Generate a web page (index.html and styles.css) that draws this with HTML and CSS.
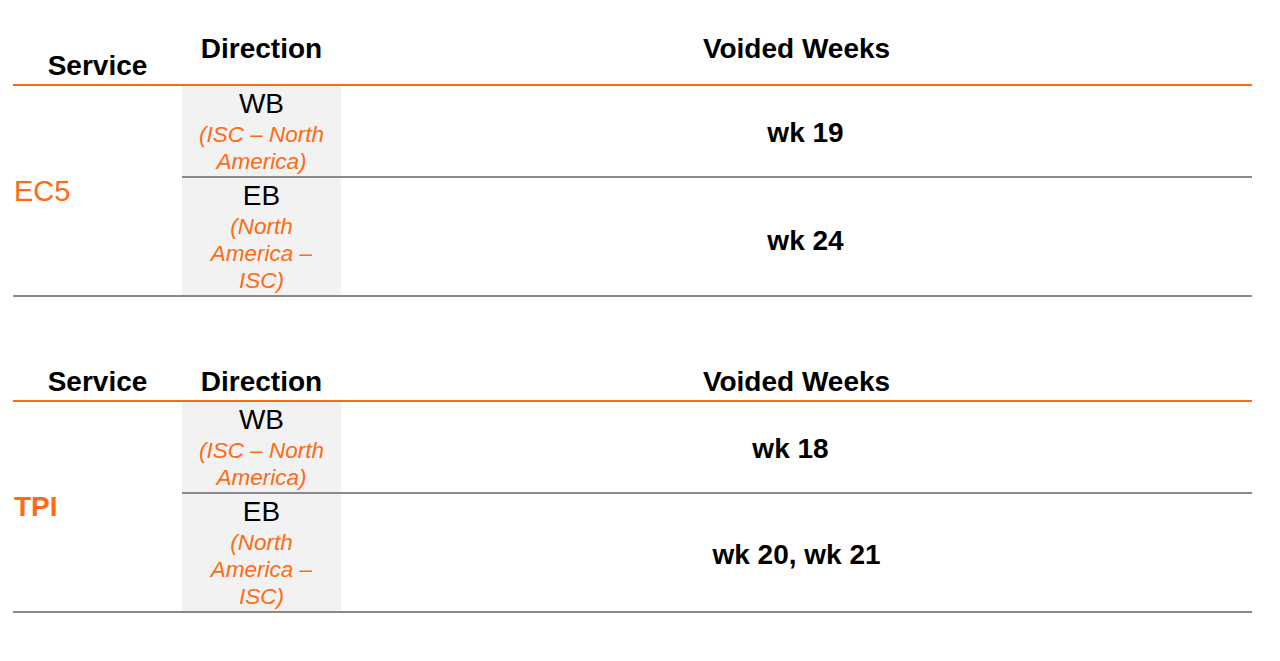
FILE: index.html
```html
<!DOCTYPE html>
<html lang="en">
<head>
<meta charset="utf-8">
<title>Voided Weeks</title>
<link rel="stylesheet" href="styles.css">
</head>
<body>
<div class="page">
  <table class="svc-table first">
    <colgroup>
      <col class="c-svc"><col class="c-dir"><col class="c-wk">
    </colgroup>
    <thead>
      <tr>
        <th class="h-svc">Service</th>
        <th class="h-top">Direction</th>
        <th class="h-top">Voided Weeks</th>
      </tr>
    </thead>
    <tbody>
      <tr>
        <td class="svc" rowspan="2">EC5</td>
        <td class="dir sep"><div class="dir-code">WB</div><div class="dir-route">(ISC – North<br>America)</div></td>
        <td class="wk sep shift-right">wk 19</td>
      </tr>
      <tr>
        <td class="dir last"><div class="dir-code">EB</div><div class="dir-route">(North<br>America –<br>ISC)</div></td>
        <td class="wk last shift-right lower">wk 24</td>
      </tr>
    </tbody>
  </table>

  <table class="svc-table second">
    <colgroup>
      <col class="c-svc"><col class="c-dir"><col class="c-wk">
    </colgroup>
    <thead>
      <tr>
        <th class="h-svc">Service</th>
        <th>Direction</th>
        <th>Voided Weeks</th>
      </tr>
    </thead>
    <tbody>
      <tr>
        <td class="svc bold" rowspan="2">TPI</td>
        <td class="dir sep"><div class="dir-code">WB</div><div class="dir-route">(ISC – North<br>America)</div></td>
        <td class="wk sep shift-left">wk 18</td>
      </tr>
      <tr>
        <td class="dir last"><div class="dir-code">EB</div><div class="dir-route">(North<br>America –<br>ISC)</div></td>
        <td class="wk last">wk 20, wk 21</td>
      </tr>
    </tbody>
  </table>
</div>
</body>
</html>
```
FILE: styles.css
```css
html, body {
  margin: 0;
  padding: 0;
  background: #ffffff;
}

.page {
  padding-left: 13px;
  font-family: "Liberation Sans", Arial, sans-serif;
  color: #000;
}

.svc-table {
  width: 1239px;
  border-collapse: separate;
  border-spacing: 0;
  table-layout: fixed;
}

.svc-table.first {
  margin-top: 33px;
}

.svc-table.second {
  margin-top: 69px;
}

.c-svc { width: 169px; }
.c-dir { width: 159px; }
.c-wk { width: 911px; }

.svc-table th {
  font-size: 28px;
  font-weight: bold;
  line-height: 32px;
  text-align: center;
  vertical-align: bottom;
  padding: 0 0 2px 0;
  border-bottom: 2px solid #ff6a13;
}

.svc-table.first th {
  height: 49px;
}

.svc-table.first th.h-top {
  vertical-align: top;
}

.svc-table td {
  padding: 0;
}

.svc {
  color: #ff6a13;
  font-size: 29px;
  line-height: 32px;
  padding-left: 1px !important;
  vertical-align: middle;
  text-align: left;
  border-bottom: 2px solid #8a8a8a;
}

.svc.bold {
  font-weight: bold;
  font-size: 28px;
}

.dir {
  background: #f2f2f2;
  text-align: center;
  vertical-align: top;
  padding: 1px 0 1px 0 !important;
}

.dir-code {
  font-size: 28px;
  line-height: 34px;
}

.dir-route {
  color: #ff6a13;
  font-size: 22.5px;
  font-style: italic;
  line-height: 27px;
}

.wk {
  font-size: 28px;
  font-weight: bold;
  text-align: center;
  vertical-align: middle;
  padding-top: 4px !important;
}

.wk.lower {
  padding-top: 8px !important;
}

.wk.shift-right {
  padding-left: 18px !important;
}

.wk.shift-left {
  padding-right: 12px !important;
}

.sep,
.last {
  border-bottom: 2px solid #8a8a8a;
}
```
